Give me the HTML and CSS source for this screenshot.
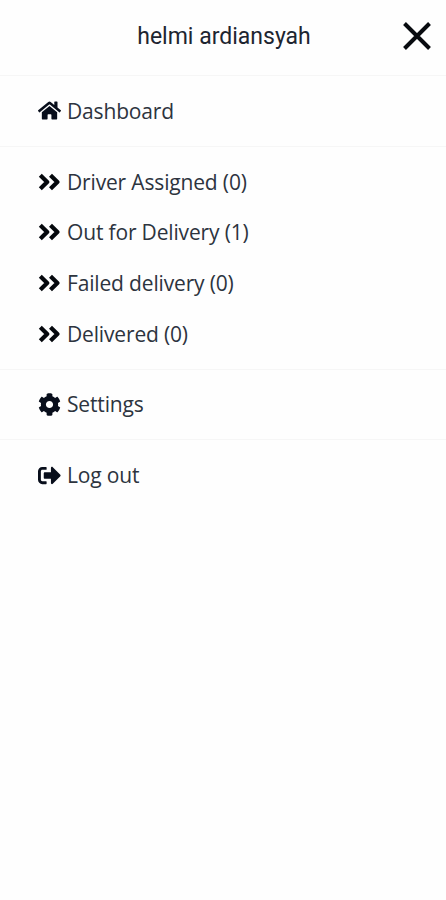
FILE: index.html
```html
<!DOCTYPE html>
<html lang="en">
<head>
<meta charset="utf-8">
<title>Menu</title>
<link rel="stylesheet" href="styles.css">
</head>
<body>
<svg class="defs" aria-hidden="true">
  <symbol id="chevrons" viewBox="0 0 22 18"><path class="line" stroke-width="4.2" stroke-linejoin="round" d="M2.300 2.200 9.200 9 2.300 15.800M12.500 2.200 19.400 9 12.500 15.800"/></symbol>
</svg>
<header class="header">
  <h1 class="name">helmi ardiansyah</h1>
  <button class="close" aria-label="Close"><svg viewBox="0 0 30 30"><path class="line" stroke-width="4" d="M2.500 2.500 27.500 27.500M27.500 2.500 2.500 27.500"/></svg></button>
</header>
<nav>
  <section class="group">
    <a class="item"><svg class="icon home" viewBox="0 0 576 512"><path d="M280.400 148.300 96 300.100V464a16 16 0 0 0 16 16l112-.3a16 16 0 0 0 16-16V368a16 16 0 0 1 16-16h64a16 16 0 0 1 16 16v95.600a16 16 0 0 0 16 16.100L464 480a16 16 0 0 0 16-16V300L295.700 148.300a12.200 12.200 0 0 0-15.300 0zM571.600 251.500 488 182.600V44a12 12 0 0 0-12-12h-56a12 12 0 0 0-12 12v72.600L318.500 43a48 48 0 0 0-61 0L4.300 251.500a12 12 0 0 0-1.600 16.900l25.500 31a12 12 0 0 0 16.900 1.600l235.200-193.700a12.200 12.200 0 0 1 15.300 0L530.900 301a12 12 0 0 0 16.900-1.600l25.500-31a12 12 0 0 0-1.700-16.900z"/></svg><span>Dashboard</span></a>
  </section>
  <section class="group">
    <a class="item"><svg class="icon chev"><use href="#chevrons"/></svg><span>Driver Assigned (0)</span></a>
    <a class="item"><svg class="icon chev"><use href="#chevrons"/></svg><span>Out for Delivery (1)</span></a>
    <a class="item"><svg class="icon chev"><use href="#chevrons"/></svg><span>Failed delivery (0)</span></a>
    <a class="item"><svg class="icon chev"><use href="#chevrons"/></svg><span>Delivered (0)</span></a>
  </section>
  <section class="group">
    <a class="item"><svg class="icon gear" viewBox="0 0 512 512"><path d="M487.400 315.700l-42.600-24.600c4.300-23.200 4.300-47 0-70.200l42.600-24.600c4.900-2.800 7.100-8.600 5.500-14-11.100-35.600-30-67.800-54.700-94.600-3.800-4.100-10-5.100-14.800-2.300L380.800 110c-17.900-15.400-38.500-27.300-60.800-35.100V25.800c0-5.600-3.900-10.500-9.400-11.700-36.700-8.200-74.300-7.800-109.200 0-5.500 1.200-9.400 6.100-9.400 11.700V75c-22.200 7.900-42.800 19.800-60.800 35.100L88.700 85.500c-4.900-2.800-11-1.900-14.800 2.300-24.700 26.700-43.600 58.900-54.700 94.600-1.700 5.400.6 11.200 5.500 14L67.300 221c-4.300 23.200-4.300 47 0 70.200l-42.600 24.600c-4.900 2.800-7.100 8.600-5.500 14 11.100 35.600 30 67.800 54.700 94.600 3.800 4.100 10 5.100 14.800 2.300l42.600-24.600c17.900 15.400 38.500 27.300 60.800 35.100v49.200c0 5.600 3.900 10.500 9.400 11.700 36.700 8.200 74.300 7.800 109.200 0 5.500-1.200 9.400-6.100 9.400-11.700v-49.200c22.200-7.900 42.800-19.800 60.800-35.100l42.600 24.600c4.900 2.800 11 1.900 14.800-2.300 24.700-26.700 43.600-58.900 54.700-94.600 1.500-5.500-.7-11.300-5.600-14.100zM256 336c-44.100 0-80-35.900-80-80s35.900-80 80-80 80 35.900 80 80-35.900 80-80 80z"/></svg><span>Settings</span></a>
  </section>
  <section class="group">
    <a class="item"><svg class="icon exit" viewBox="0 0 512 512"><path d="M497 273 329 441c-15 15-41 4.500-41-17v-96H152c-13.300 0-24-10.700-24-24v-96c0-13.300 10.700-24 24-24h136V88c0-21.400 25.900-32 41-17l168 168c9.300 9.400 9.300 24.600 0 34zM192 436v-40c0-6.600-5.400-12-12-12H96c-17.700 0-32-14.300-32-32V160c0-17.700 14.300-32 32-32h84c6.600 0 12-5.400 12-12V76c0-6.600-5.400-12-12-12H96c-53 0-96 43-96 96v192c0 53 43 96 96 96h84c6.600 0 12-5.400 12-12z"/></svg><span>Log out</span></a>
  </section>
</nav>
</body>
</html>
```
FILE: styles.css
```css
* { box-sizing: border-box; }
body { margin: 0; background: #fefefe; color: #2d343e; font-family: "Open Sans", sans-serif; }
.defs { position: absolute; width: 0; height: 0; }
.header { display: grid; grid-template-columns: 1fr auto 1fr; align-items: center; height: 75px; padding: 0 14px 3px 14px; }
.name { grid-column: 2; margin: 1px 0 0 2px; color: #1d2530; font: 400 23px/30px Roboto, sans-serif; white-space: nowrap; }
.close { justify-self: end; width: 30px; height: 30px; padding: 0; border: 0; background: none; color: #080b10; }
.close svg { display: block; width: 30px; height: 30px; }
.line { fill: none; stroke: currentColor; }
.group { padding: 9.600px 0; border-top: 1px solid #f6f6f6; }
.item { display: flex; align-items: center; gap: 7px; height: 50.650px; padding-left: 38px; font-size: 21px; line-height: 30px; letter-spacing: -.16px; white-space: nowrap; }
.icon { flex: none; width: 22px; height: 22px; fill: #080e1b; color: #05080d; }
.home, .exit, .gear { width: 23px; height: 23px; margin-right: -1px; }
.chev { height: 18px; }
```
